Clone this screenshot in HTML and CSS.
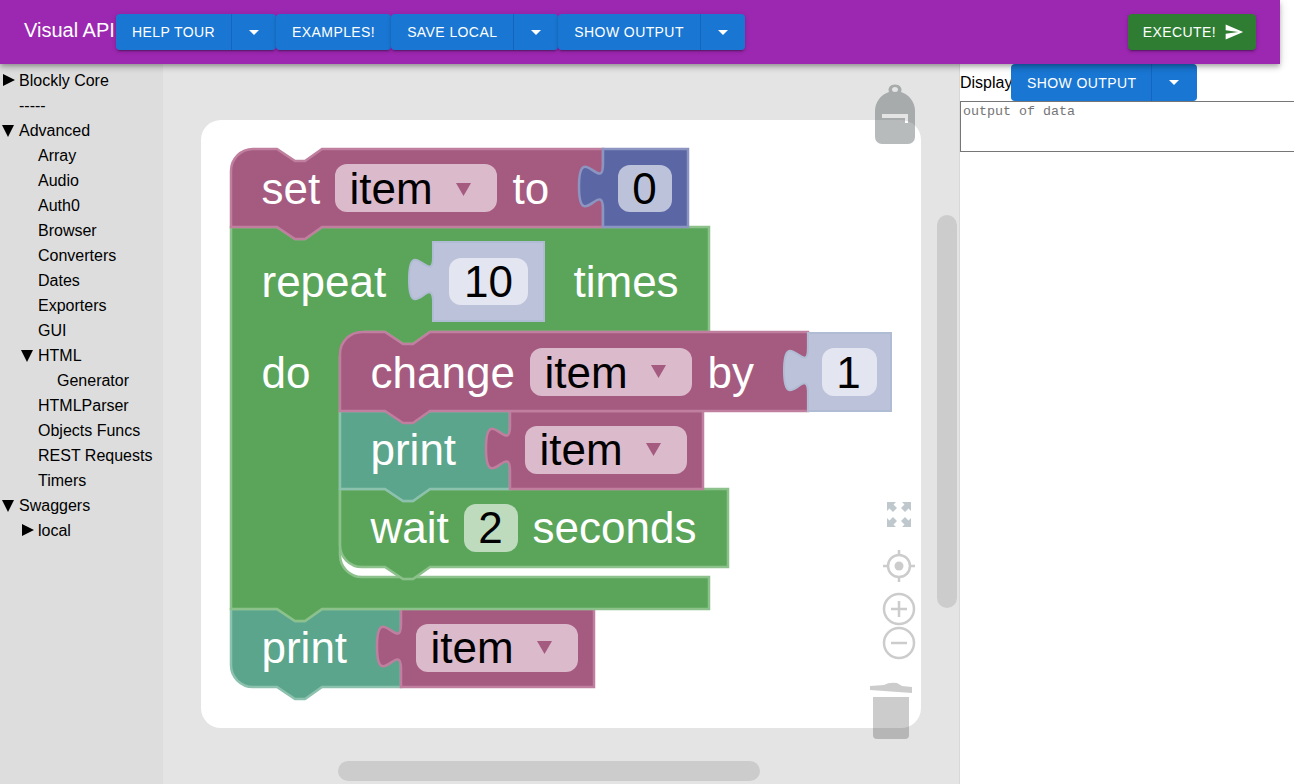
FILE: index.html
```html
<!DOCTYPE html>
<html>
<head>
    <title>Visual API</title>
    <link rel="stylesheet" href="styles.css">
</head>
<body>

<header class="topbar">
    <span class="title">Visual API</span>
    <div class="btn-group">
        <button class="btn">Help Tour</button>
        <button class="btn btn-arrow"><i class="caret"></i></button>
    </div>
    <div class="btn-group">
        <button class="btn">Examples!</button>
    </div>
    <div class="btn-group">
        <button class="btn">Save Local</button>
        <button class="btn btn-arrow"><i class="caret"></i></button>
    </div>
    <div class="btn-group">
        <button class="btn">Show Output</button>
        <button class="btn btn-arrow"><i class="caret"></i></button>
    </div>
    <button class="btn btn-run">Execute!
        <svg class="send" viewBox="0 0 24 24"><path d="M2.01 21 23 12 2.01 3 2 10l15 2-15 2z"/></svg>
    </button>
</header>

<main class="content">
    <nav class="tree">
        <ul>
            <li class="closed">Blockly Core</li>
            <li>-----</li>
            <li class="open">Advanced
                <ul>
                    <li>Array</li>
                    <li>Audio</li>
                    <li>Auth0</li>
                    <li>Browser</li>
                    <li>Converters</li>
                    <li>Dates</li>
                    <li>Exporters</li>
                    <li>GUI</li>
                    <li class="open">HTML
                        <ul>
                            <li>Generator</li>
                        </ul>
                    </li>
                    <li>HTMLParser</li>
                    <li>Objects Funcs</li>
                    <li>REST Requests</li>
                    <li>Timers</li>
                </ul>
            </li>
            <li class="open">Swaggers
                <ul>
                    <li class="closed">local</li>
                </ul>
            </li>
        </ul>
    </nav>

    <svg class="workspace" viewBox="163 64 796 720">
        <rect class="paper" x="201" y="120" width="720" height="608" rx="20"/>

        <!-- blocks, children first so the tabs sit in the notches -->
        <path class="b-print" d="M231 609 H277 L295 621 H305 L322 609 H401 V687 H322 L305 699 H295 L277 687 H253 A22 22 0 0 1 231 665 Z"/>
        <path class="b-var" d="M401 609 H594 V687 H401 V669 c0 -30 -24 24 -24 -22.5 s24 7.500 24 -22.500 Z"/>
        <rect class="field-var" x="416" y="624" width="162" height="48" rx="12"/>
        <text class="txt" x="262" y="663">print</text>
        <text class="txt-dark" x="431" y="663">item</text>
        <path class="tri" d="M537 641 H552 L544.500 654 Z"/>

        <path class="b-loop" d="M231 227 H277 L295 239 H305 L322 227 H709 V332 H430 L413 344 H403 L385 332 H340 V555 A22 22 0 0 0 362 577 H709 V609 H322 L305 621 H295 L277 609 H231 Z"/>
        <rect class="corner-fill" x="338" y="330" width="26" height="26"/>
        <text class="txt" x="262" y="297">repeat</text>
        <text class="txt" x="574" y="297">times</text>
        <text class="txt" x="262" y="388">do</text>
        <path class="b-num" d="M433 242 H544 V321 H433 V302 c0 -30 -24 24 -24 -22.500 s24 7.500 24 -22.500 Z"/>
        <rect class="field-num" x="449" y="258" width="79" height="47" rx="12"/>
        <text class="txt-dark mid" x="489" y="297">10</text>

        <path class="b-loop" d="M340 489 H385 L403 501 H413 L430 489 H728 V567 H430 L413 579 H403 L385 567 H362 A22 22 0 0 1 340 545 Z"/>
        <rect class="field-wait" x="464" y="504" width="54" height="48" rx="12"/>
        <text class="txt" x="371" y="543">wait</text>
        <text class="txt-dark mid" x="491" y="543">2</text>
        <text class="txt" x="533" y="543">seconds</text>

        <path class="b-print" d="M340 411 H510 V489 H430 L413 501 H403 L385 489 H340 Z"/>
        <path class="b-var" d="M510 411 H703 V489 H510 V471 c0 -30 -24 24 -24 -22.500 s24 7.500 24 -22.500 Z"/>
        <rect class="field-var" x="525" y="426" width="162" height="48" rx="12"/>
        <text class="txt" x="371" y="465">print</text>
        <text class="txt-dark" x="540" y="465">item</text>
        <path class="tri" d="M646 443 H661 L653.500 456 Z"/>

        <path class="b-var" d="M362 332 H385 L403 344 H413 L430 332 H808 V411 H430 L413 423 H403 L385 411 H340 V354 A22 22 0 0 1 362 332 Z"/>
        <path class="b-num" d="M808 333 H891 V411 H808 V393 c0 -30 -24 24 -24 -22.500 s24 7.500 24 -22.500 Z"/>
        <rect class="field-var" x="530" y="348" width="162" height="48" rx="12"/>
        <rect class="field-num" x="822" y="348" width="55" height="48" rx="12"/>
        <text class="txt" x="371" y="388">change</text>
        <text class="txt-dark" x="545" y="388">item</text>
        <path class="tri" d="M651 365 H666 L658.500 378 Z"/>
        <text class="txt" x="708" y="388">by</text>
        <text class="txt-dark mid" x="849" y="388">1</text>

        <path class="b-var" d="M253 149 H277 L295 161 H305 L322 149 H603 V227 H322 L305 239 H295 L277 227 H231 V171 A22 22 0 0 1 253 149 Z"/>
        <path class="b-math" d="M603 149 H688 V227 H603 V209 c0 -30 -24 24 -24 -22.500 s24 7.500 24 -22.500 Z"/>
        <rect class="field-var" x="335" y="164" width="162" height="48" rx="12"/>
        <rect class="field-math" x="618" y="165" width="54" height="47" rx="12"/>
        <text class="txt" x="262" y="204">set</text>
        <text class="txt-dark" x="350" y="204">item</text>
        <path class="tri" d="M456 183 H471 L463.500 196 Z"/>
        <text class="txt" x="513" y="204">to</text>
        <text class="txt-dark mid" x="645" y="204">0</text>

        <!-- backpack -->
        <g class="backpack">
            <path fill-rule="evenodd" d="M889 92 A6.500 5.500 0 1 1 901 92 A20 20 0 0 1 915 111 V137 A7 7 0 0 1 908 144 H882 A7 7 0 0 1 875 137 V111 A20 20 0 0 1 889 92 Z M892 89.500 A3 2.500 0 1 1 898 89.500 A3 2.500 0 1 1 892 89.500 Z M882 114 V118 H905 V123 H908 V114 Z"/>
        </g>

        <!-- zoom controls -->
        <path class="fs" d="M887 502 H896 L893.500 504.500 L897 508 L893 512 L889.500 508.500 L887 511 Z M911 502 V511 L908.500 508.500 L905 512 L901 508 L904.500 504.500 L902 502 Z M887 527 V518 L889.500 520.500 L893 517 L897 521 L893.500 524.500 L896 527 Z M911 527 H902 L904.500 524.500 L901 521 L905 517 L908.500 520.500 L911 518 Z"/>
        <g class="ctl">
            <circle cx="899" cy="566" r="11"/>
            <path d="M899 550 V555 M899 577 V582 M883 566 H888 M910 566 H915"/>
            <circle cx="899" cy="609" r="15"/>
            <path d="M899 601 V617 M891 609 H907"/>
            <circle cx="899" cy="643" r="15"/>
            <path d="M891 643 H907"/>
        </g>
        <circle class="ctl-dot" cx="899" cy="566" r="4.500"/>

        <!-- trash -->
        <path class="trash" d="M873 697 H909 V735 A4 4 0 0 1 905 739 H877 A4 4 0 0 1 873 735 Z"/>
        <path class="trash" d="M870 686 L884 685 Q889 682 897 683 L902 686 L912 687 L912 693 L870 690 Z"/>

        <!-- workspace scrollbars -->
        <rect class="scroll" x="937" y="215" width="20" height="393" rx="10"/>
        <rect class="scroll" x="338" y="761" width="422" height="20" rx="10"/>
    </svg>

    <section class="output">
        <div class="output-head">
            <span class="output-label">Display</span>
            <div class="btn-group flat">
                <button class="btn">Show Output</button>
                <button class="btn btn-arrow"><i class="caret"></i></button>
            </div>
        </div>
        <textarea class="output-box" placeholder="output of data"></textarea>
    </section>
</main>

</body>
</html>
```

FILE: styles.css
```css
html, body { margin: 0; height: 100%; overflow: hidden; background-color: #fff; font-family: "Liberation Sans", Arial, sans-serif; }

.topbar { position: relative; z-index: 10; display: flex; align-items: center; box-sizing: border-box; width: 1280px; height: 64px; padding: 0 24px; background-color: #9c27b0; color: #fff;
    box-shadow: 0 2px 4px -1px rgba(0,0,0,.2), 0 4px 5px rgba(0,0,0,.14), 0 1px 10px rgba(0,0,0,.12);
}
.title { font-size: 20px; white-space: nowrap; width: 92px; padding-bottom: 4px; }

.btn-group { display: flex; border-radius: 4px; box-shadow: 0 3px 1px -2px rgba(0,0,0,.2), 0 2px 2px rgba(0,0,0,.14), 0 1px 5px rgba(0,0,0,.12); }
.btn-group.flat { box-shadow: none; }

.btn { display: flex; align-items: center; height: 36px; padding: 0 16px; border: none; background-color: #1976d2; color: #fff; font-family: inherit; font-size: 14px; letter-spacing: .41px; text-transform: uppercase; white-space: nowrap; border-radius: 4px; }
.btn-group .btn:first-child:not(:last-child) { border-radius: 4px 0 0 4px; border-right: 1px solid #1565c0; }
.btn-arrow { width: 44px; padding: 0; justify-content: center; border-radius: 0 4px 4px 0; }
.caret { width: 0; height: 0; border: 5px solid transparent; border-top-color: #fff; border-bottom: none; }

.btn-run { margin-left: auto; padding: 0 12px 0 15px; background-color: #2e7d32; box-shadow: 0 3px 1px -2px rgba(0,0,0,.2), 0 2px 2px rgba(0,0,0,.14), 0 1px 5px rgba(0,0,0,.12); }
.send { width: 20px; height: 20px; margin-left: 8px; fill: #fff; }

.content { display: flex; height: 720px; }

.tree { box-sizing: border-box; width: 163px; flex: none; padding-top: 4px; background-color: #ddd; color: #000; font-size: 16px; }
.tree ul { list-style: none; margin: 0; padding: 0 0 0 19px; }
.tree li { position: relative; line-height: 25px; white-space: nowrap; }
.tree li.closed::before { content: ""; position: absolute; left: -16px; top: 6px; border-style: solid; border-width: 6.5px 0 6.5px 12px; border-color: transparent transparent transparent #000; }
.tree li.open::before { content: ""; position: absolute; left: -17px; top: 7px; border-style: solid; border-width: 12px 6.5px 0 6.5px; border-color: #000 transparent transparent transparent; }

.workspace { display: block; width: 796px; height: 720px; flex: none; background-color: #e4e4e4; }
.paper { fill: #fff; }
.scroll { fill: #ccc; }
.corner-fill { fill: #5ba55b; }

.b-var { fill: #a55b80; stroke: #c07f9f; stroke-width: 2.500; }
.b-loop { fill: #5ba55b; stroke: #8cc18c; stroke-width: 2.500; }
.b-print { fill: #5ba58c; stroke: #8cc1ae; stroke-width: 2.500; }
.b-num { fill: #bdc2db; stroke: #b0bcd4; stroke-width: 2; }
.b-math { fill: #5b67a5; stroke: #8c95c1; stroke-width: 2.500; }
.field-var { fill: #dbbacc; }
.field-num { fill: #e3e5f0; }
.field-wait { fill: #bedbbe; }
.field-math { fill: #bdc2db; }
.tri { fill: #a55b80; }
.txt, .txt-dark { font-family: "Liberation Sans", Arial, sans-serif; font-size: 44px; transform: translateX(-.5px); }
.txt { fill: #fff; }
.txt-dark { fill: #000; }
.mid { text-anchor: middle; }

.backpack { fill: #4b5457; opacity: .4; }
.fs { fill: #bfc9cd; }
.ctl { fill: none; stroke: #ccc; stroke-width: 2.500; }
.ctl-dot { fill: #ccc; }
.trash { fill: #000; opacity: .2; }

.output { flex: 1; min-width: 0; overflow: hidden; border-left: 1px solid #d8d8d8; }
.output-head { display: flex; align-items: center; height: 37px; font-size: 16px; color: #000; }
.output-label { width: 51px; flex: none; white-space: nowrap; }
.output-head .btn { height: 37px; }
.output-head .btn:first-child { padding-right: 14px; }
.output-head .btn-arrow { width: 45px; }
.output-box { display: block; box-sizing: border-box; width: 360px; height: 51px; margin: 0; padding: 2px; border: 1px solid #767676; border-radius: 0; font-family: "Liberation Mono", monospace; font-size: 13.333px; resize: none; outline: none; }
.output-box::placeholder { color: #757575; }
```
